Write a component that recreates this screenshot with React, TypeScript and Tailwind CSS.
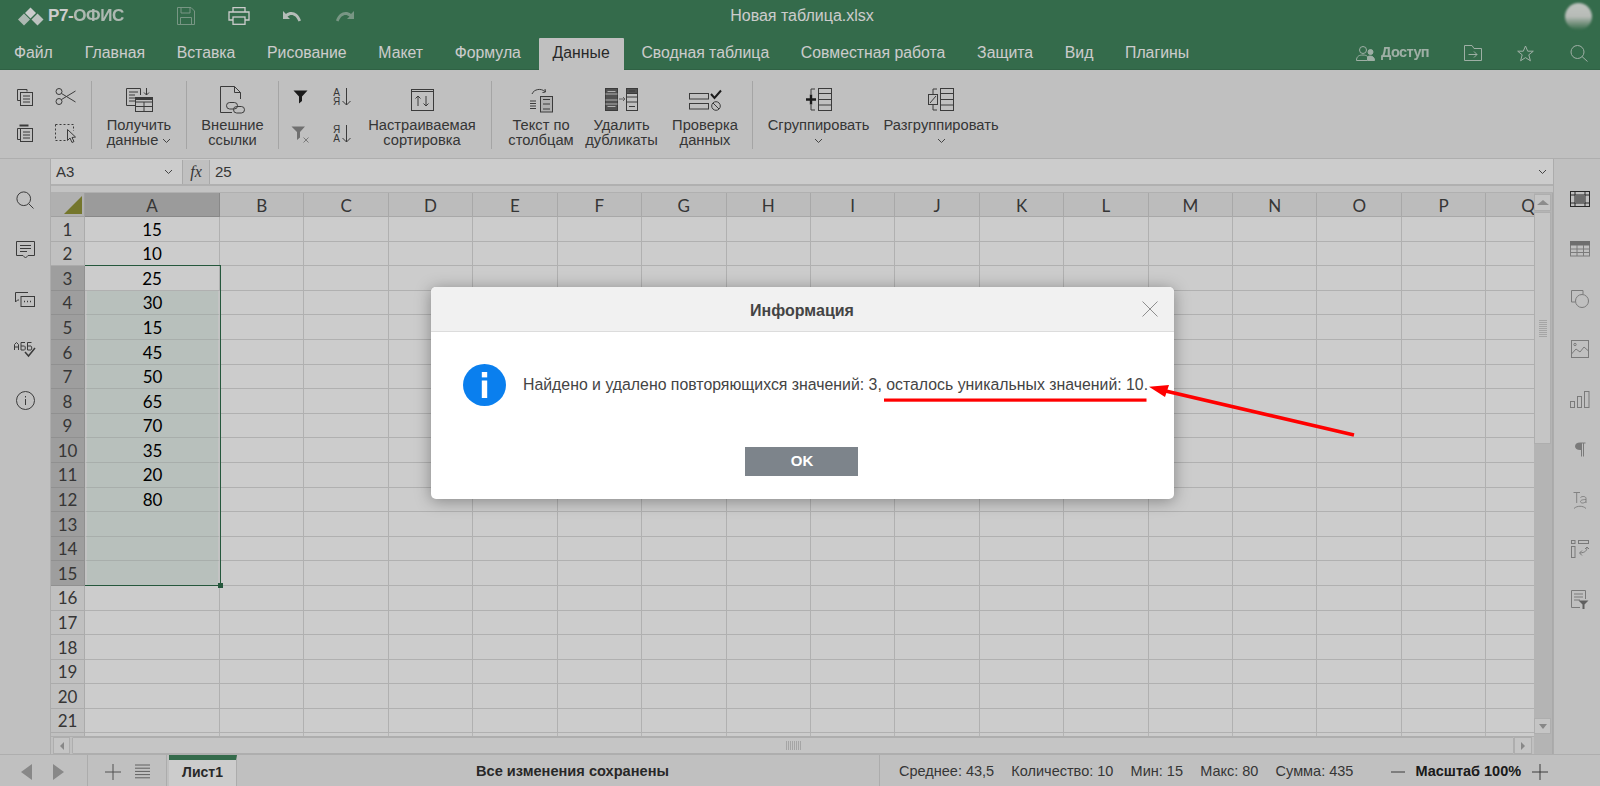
import React from "react";

const F = "[font-family:'Liberation_Sans',Arial,sans-serif]";
const I = "#4a4a4a";

function Svg({ w, h, children, className = "" }: { w: number; h: number; children: React.ReactNode; className?: string }) {
  return (
    <svg width={w} height={h} viewBox={`0 0 ${w} ${h}`} fill="none" stroke={I} strokeWidth={1} className={"shrink-0 " + className}>
      {children}
    </svg>
  );
}

const Chevron = ({ c = "#555" }: { c?: string }) => (
  <svg width="9" height="6" viewBox="0 0 9 6" fill="none" stroke={c} className="shrink-0">
    <path d="M1 1l3.5 3.5L8 1" />
  </svg>
);

function Tab({ t, active }: { t: string; active?: boolean }) {
  return (
    <div className={"flex h-[32px] items-center rounded-t-[1px] px-[14px] pb-[3px] text-[15.8px] " + (active ? "bg-[#f1f1f1] text-[#333]" : "text-white")}>{t}</div>
  );
}

function Tool({ icon, lines, w, chev, chevLine, className = "" }: { icon: React.ReactNode; lines: string[]; w: number; chev?: boolean; chevLine?: boolean; className?: string }) {
  return (
    <div className={"flex h-[68px] shrink-0 flex-col items-center " + className} style={{ width: w }}>
      <div className="flex h-[37px] items-center justify-center">{icon}</div>
      <div className="flex flex-col items-center whitespace-nowrap text-[14.7px] leading-[15px] text-[#444]">
        {lines.map((l, i) => (
          <div key={i} className="flex h-[15px] items-center gap-[4px]">
            {l}
            {chev && i === lines.length - 1 && <Chevron />}
          </div>
        ))}
        {chevLine && (
          <div className="flex h-[15px] items-center">
            <Chevron />
          </div>
        )}
      </div>
    </div>
  );
}

const Div = () => <div className="h-[68px] w-px shrink-0 bg-[#cfcfcf]" />;

const CopyIcon = () => (
  <Svg w={18} h={18}>
    <path d="M11 3.5V1.5H1.5V12.5H4" />
    <rect x="4.5" y="4.5" width="12" height="13" />
    <path d="M7 8h7M7 11h7M7 14h7" />
  </Svg>
);
const PasteIcon = () => (
  <Svg w={18} h={18}>
    <path d="M4 4.5H1.5V15.5H4" />
    <path d="M3.5 1.5H12.5" strokeWidth={2} />
    <rect x="4.5" y="4.5" width="12" height="13" />
    <path d="M7 8h7M7 11h7M7 14h7" />
  </Svg>
);
const Scissors = () => (
  <Svg w={21} h={17}>
    <circle cx="4" cy="3.5" r="3" />
    <circle cx="4" cy="13.5" r="3" />
    <path d="M6.5 5.5L20.5 14M6.5 11.5L20.5 3" />
  </Svg>
);
const SelectAll = () => (
  <Svg w={23} h={20}>
    <path d="M1.5 1.5H19.5V8M1.5 1.5V17.5H12" strokeDasharray="2 2" />
    <path d="M13.5 6.5V17.5L16 15L18 19.5L20 18.5L18 14.5L21.5 14Z" fill="#f1f1f1" />
  </Svg>
);
const GetData = () => (
  <Svg w={28} h={26}>
    <path d="M10 18.5H1.5V1.5H15.5V8" />
    <path d="M4 5h9M4 8h6M4 11h6M4 14h6" />
    <path d="M21.5 1v7M19 5.5l2.5 2.5 2.5-2.5" />
    <rect x="10.5" y="10.5" width="17" height="14" />
    <path d="M10.5 15h17M10.5 19.5h17M19 15v9.5" />
    <path d="M10.5 12h17" strokeWidth={2} />
  </Svg>
);
const ExtLinks = () => (
  <Svg w={27} h={29}>
    <path d="M13 27.5H1.5V1.5H15.5L21.5 7.5V14" />
    <path d="M15.5 1.5V7.5H21.5" />
    <rect x="7.5" y="17.5" width="11" height="6.5" rx="3.2" />
    <rect x="14.5" y="21.5" width="11" height="6.5" rx="3.2" />
  </Svg>
);
const FilterIcon = () => (
  <svg width="15" height="14" viewBox="0 0 15 14" className="shrink-0">
    <path d="M0.5 0.5H14.5L9 6.5V11L6 13.5V6.5Z" fill="#222" />
  </svg>
);
const ClearFilter = () => (
  <svg width="19" height="17" viewBox="0 0 19 17" className="shrink-0" fill="none">
    <path d="M0.5 0.5H14L9 6V11.5L6 14V6Z" fill="#8c8c8c" />
    <path d="M12.5 11.5l5 5M17.5 11.5l-5 5" stroke="#999" />
  </svg>
);
function SortIcon({ a, b }: { a: string; b: string }) {
  return (
    <div className="flex items-center gap-[2px]">
      <div className="flex flex-col items-center text-[10px] leading-[9px] text-[#444]">
        <span>{a}</span>
        <span>{b}</span>
      </div>
      <Svg w={9} h={18}>
        <path d="M4.5 0v17M0.5 13l4 4 4-4" />
      </Svg>
    </div>
  );
}
const CustomSort = () => (
  <Svg w={25} h={24}>
    <rect x="1.5" y="1.5" width="22" height="21" />
    <path d="M1.5 3.5h22" />
    <path d="M8 18V8M5.5 10.5L8 8l2.5 2.5M16 8v10M13.5 15.5L16 18l2.5-2.5" />
  </Svg>
);
const TextCols = () => (
  <Svg w={25} h={26}>
    <path d="M3 7C5 2 12 1 16 4.5" />
    <path d="M13.5 5.5l3-.5-.5-3" />
    <path d="M1 14h6M1 16.5h6M1 19h6M1 21.5h6" />
    <rect x="11.5" y="9.5" width="12" height="15.5" fill="#ddd" />
    <path d="M14 12.5h7M14 17h7M14 22h7" />
  </Svg>
);
const Dedup = () => (
  <Svg w={33} h={23}>
    <rect x="0.5" y="0.5" width="12" height="22" fill="#666" />
    <path d="M2.5 3.5h8M2.5 18.5h8M0.5 6h12M0.5 12h12M0.5 16h12" stroke="#ddd" />
    <rect x="21.5" y="0.5" width="11" height="22" />
    <rect x="21.5" y="0.5" width="11" height="5" fill="#666" />
    <path d="M21.5 9h11M21.5 14h11M24 3h6M24 18.5h6" />
    <path d="M14 11h6M18 9l2 2-2 2" stroke="#777" />
  </Svg>
);
const Validate = () => (
  <Svg w={33} h={22}>
    <rect x="0.5" y="4.5" width="19" height="5.5" />
    <rect x="0.5" y="14.5" width="19" height="5.5" />
    <path d="M22 5l3.5 4L32 1.5" strokeWidth={2} stroke="#222" />
    <circle cx="27" cy="17" r="4.3" />
    <path d="M24 14l6 6" />
  </Svg>
);
const Group = () => (
  <Svg w={26} h={23}>
    <path d="M9 1h-4v5M9 22h-4v-5" />
    <path d="M0 11.5h10M5 6.5v10" strokeWidth={2.4} stroke="#222" />
    <rect x="12.5" y="0.5" width="13" height="22" />
    <path d="M12.5 5.5h13M12.5 11.5h13M12.5 17h13" />
  </Svg>
);
const Ungroup = () => (
  <Svg w={26} h={23}>
    <path d="M9 1h-4v5M9 22h-4v-5" />
    <rect x="0.5" y="6.5" width="9" height="10" />
    <path d="M2 15l6-7" />
    <rect x="12.5" y="0.5" width="13" height="22" />
    <path d="M12.5 5.5h13M12.5 11.5h13M12.5 17h13" />
  </Svg>
);

const cols = ["B", "C", "D", "E", "F", "G", "H", "I", "J", "K", "L", "M", "N", "O", "P", "Q"];
const vals: (number | string)[] = [15, 10, 25, 30, 15, 45, 50, 65, 70, 35, 20, 80, "", "", "", "", "", "", "", "", ""];

const Lato = "[font-family:Lato,'Liberation_Sans',sans-serif]";

function Row({ n, v }: { n: number | string; v: number | string }) {
  const idx = Number(n);
  const sel = idx >= 3 && idx <= 15;
  const tint = idx >= 4 && idx <= 15;
  return (
    <div className={"flex h-[24.6px] shrink-0 " + Lato}>
      <div className={"flex w-[34px] shrink-0 items-center justify-center border-b border-r pt-px text-[17px] text-[#444] " + (sel ? "border-[#b4b4b4] bg-[#c6c6c6]" : "border-[#d6d6d6] bg-[#f1f1f1]")}>{n}</div>
      <div className={"flex w-[135px] shrink-0 items-center justify-center border-b pt-px text-[17px] text-black " + (tint ? "border-l-2 border-r-2 border-b-[#d2dad6] border-l-[#f4f4f4] border-r-[#f4f4f4] bg-[#e6f0ec]" : "border-r border-[#dcdcdc] bg-white")}>{v}</div>
      {cols.map((c) => (
        <div key={c} className="w-[84.43px] shrink-0 border-b border-r border-[#dcdcdc] bg-white" />
      ))}
    </div>
  );
}

const SideSearch = ({ s = 18 }: { s?: number }) => (
  <Svg w={s} h={s}>
    <circle cx={s * 0.43} cy={s * 0.43} r={s * 0.38} />
    <path d={`M${s * 0.7} ${s * 0.7}L${s - 0.5} ${s - 0.5}`} />
  </Svg>
);

function Slot({ children }: { children: React.ReactNode }) {
  return <div className="flex h-[50px] shrink-0 items-center justify-center">{children}</div>;
}

export default function App() {
  return (
    <div className={"relative flex h-[786px] w-[1600px] flex-col overflow-hidden bg-white " + F}>
      {/* header */}
      <header className="flex h-[70px] shrink-0 flex-col border-b border-[#3b7a56] bg-[#42865e]">
        <div className="grid h-[38px] shrink-0 grid-cols-[1fr_auto_1fr] items-center pb-[6px]">
          <div className="flex items-center">
            <svg width="26" height="19" viewBox="0 0 26 19" className="ml-[18px] shrink-0" fill="#fff">
              <path d="M12.5 0.5L18 6L12.5 11.5L7 6Z" />
              <path d="M6 6.5L12 12.5L6 18.5L0 12.5Z" opacity="0.8" />
              <path d="M19.5 6.5L25.5 12.5L19.5 18.5L13.5 12.5Z" opacity="0.9" />
            </svg>
            <span className="ml-[4px] text-[17px] font-bold tracking-[-0.4px] text-white">
              Р7-<span className="opacity-80">ОФИС</span>
            </span>
            <svg width="18" height="18" viewBox="0 0 18 18" fill="none" stroke="#fff" opacity=".45" className="ml-[53px] shrink-0">
              <path d="M0.5 0.5H14L17.5 4V17.5H0.5Z" />
              <path d="M4 0.5V6H13V0.5M3.5 17.5V10.5H14.5V17.5" />
            </svg>
            <svg width="22" height="18" viewBox="0 0 22 18" fill="none" stroke="#fff" strokeWidth="1.3" className="ml-[33px] shrink-0">
              <path d="M5 5V0.7H17V5" />
              <path d="M5 13H1V5H21V13H17" />
              <rect x="5" y="10" width="12" height="7.3" />
            </svg>
            <svg width="18" height="11" viewBox="0 0 18 11" fill="#fff" opacity=".85" className="ml-[33px] shrink-0">
              <path d="M0 0V8H7L4.5 5.5C8 2.5 13 3.5 15.5 10.5L18 9.5C15 1 8 -1 3 3Z" />
            </svg>
            <svg width="18" height="11" viewBox="0 0 18 11" fill="#fff" opacity=".45" className="ml-[35px] shrink-0">
              <path d="M18 0V8H11L13.5 5.5C10 2.5 5 3.5 2.5 10.5L0 9.5C3 1 10 -1 15 3Z" />
            </svg>
          </div>
          <div className="pl-[4px] text-[16px] text-white">Новая таблица.xlsx</div>
          <div className="flex justify-end pr-[8px]">
            <div className="h-[27px] w-[27px] rounded-full bg-gradient-to-b from-[#f0f4ef] via-[#e6ebe6] to-[#42865e] blur-[1px]" />
          </div>
        </div>
        <div className="flex h-[32px] items-center">
          <Tab t="Файл" />
          <div className="ml-[4px] flex items-center gap-[3.7px]">
            <Tab t="Главная" />
            <Tab t="Вставка" />
            <Tab t="Рисование" />
            <Tab t="Макет" />
            <Tab t="Формула" />
            <Tab t="Данные" active />
            <Tab t="Сводная таблица" />
            <Tab t="Совместная работа" />
            <Tab t="Защита" />
            <Tab t="Вид" />
            <Tab t="Плагины" />
          </div>
          <div className="ml-auto flex items-center pb-[2px] text-white">
            <svg width="19" height="15" viewBox="0 0 19 15" fill="none" stroke="#fff" opacity=".7" className="shrink-0">
              <circle cx="7" cy="4" r="3.5" />
              <path d="M0.5 14.5C0.5 10 3.5 9 7 9C9 9 10.5 9.5 11.5 10.5V14.5Z" />
              <circle cx="14.5" cy="6" r="2.5" fill="#fff" />
              <path d="M12 14.5V10.5C14 9.5 18.5 10 18.5 14.5Z" fill="#fff" />
            </svg>
            <span className="ml-[6px] text-[14.5px] font-bold tracking-[-0.6px] opacity-70">Доступ</span>
            <svg width="18" height="16" viewBox="0 0 18 16" fill="none" stroke="#fff" opacity=".7" className="ml-[35px] shrink-0">
              <path d="M0.5 15.5V0.5H8L10 3.5H17.5V15.5Z" />
              <path d="M4.5 9.5H13M10 6.5L13 9.5L10 12.5" />
            </svg>
            <svg width="17" height="17" viewBox="0 0 17 17" fill="none" stroke="#fff" opacity=".7" className="ml-[35px] shrink-0">
              <path d="M8.5 1L10.7 6.2H16.3L11.8 9.8L13.4 15.8L8.5 12.6L3.6 15.8L5.2 9.8L0.7 6.2H6.3Z" />
            </svg>
            <svg width="18" height="17" viewBox="0 0 18 17" fill="none" stroke="#fff" opacity=".7" className="ml-[36px] mr-[12px] shrink-0">
              <circle cx="7.5" cy="7" r="6.5" />
              <path d="M12 11.5L17.5 16.5" />
            </svg>
          </div>
        </div>
      </header>

      {/* toolbar */}
      <div className="flex h-[89px] shrink-0 items-start border-b border-[#dadada] bg-[#f1f1f1] pt-[11px]">
        <div className="grid w-[91px] shrink-0 grid-cols-[50px_31px] grid-rows-[31px_41px] place-items-center">
          <CopyIcon />
          <Scissors />
          <PasteIcon />
          <SelectAll />
        </div>
        <Div />
        <Tool w={94} icon={<GetData />} lines={["Получить", "данные"]} chev />
        <Div />
        <Tool w={91} icon={<ExtLinks />} lines={["Внешние", "ссылки"]} />
        <Div />
        <div className="grid w-[84px] shrink-0 grid-cols-2 grid-rows-[32px_42px] place-items-center">
          <FilterIcon />
          <SortIcon a="А" b="Я" />
          <ClearFilter />
          <SortIcon a="Я" b="А" />
        </div>
        <Tool w={116} icon={<CustomSort />} lines={["Настраиваемая", "сортировка"]} className="ml-[1px] mr-[11px]" />
        <Div />
        <Tool w={60} icon={<TextCols />} lines={["Текст по", "столбцам"]} className="ml-[19px]" />
        <Tool w={71} icon={<Dedup />} lines={["Удалить", "дубликаты"]} className="ml-[15px]" />
        <Tool w={64} icon={<Validate />} lines={["Проверка", "данных"]} className="ml-[16px] mr-[15px]" />
        <Div />
        <Tool w={99} icon={<Group />} lines={["Сгруппировать"]} chevLine className="ml-[16px]" />
        <Tool w={112} icon={<Ungroup />} lines={["Разгруппировать"]} chevLine className="ml-[17px]" />
      </div>

      {/* main */}
      <div className="flex min-h-0 flex-1">
        {/* left side */}
        <aside className="flex w-[51px] shrink-0 flex-col items-center border-r border-[#d8d8d8] bg-[#f1f1f1] pt-[16px]">
          <Slot><SideSearch /></Slot>
          <Slot>
            <Svg w={19} h={18}>
              <path d="M0.5 0.5H18.5V14.5H12L9.5 17L7 14.5H0.5Z" />
              <path d="M4 4.5h11M4 7.5h11M4 10.5h7" />
            </Svg>
          </Slot>
          <Slot>
            <Svg w={20} h={16}>
              <path d="M13 0.5H0.5V10L2.5 8H4" />
              <rect x="6" y="4.5" width="13.5" height="10" />
              <path d="M9 9.5h1M12 9.5h1M15 9.5h1" strokeWidth={1.5} />
            </Svg>
          </Slot>
          <Slot>
            <svg width="22" height="16" viewBox="0 0 22 16" fill="none" stroke={I} className="shrink-0">
              <path d="M0.5 8V2.5L2.5 0.5L4.5 2.5V8M0.5 5H4.5" />
              <path d="M7 8V0.5H11M7 4H10.5C11.5 4 11.5 8 10.5 8H7" />
              <path d="M13.5 8V0.5H17.5M13.5 4H17C18 4 18 8 17 8H13.5" />
              <path d="M11 10l3.5 4L21 6" strokeWidth="1.5" />
            </svg>
          </Slot>
          <Slot>
            <Svg w={19} h={19}>
              <circle cx="9.5" cy="9.5" r="9" />
              <path d="M9.5 8v6M9.5 5v1.5" />
            </Svg>
          </Slot>
        </aside>

        {/* center */}
        <div className="flex w-[1502px] shrink-0 flex-col">
          {/* formula bar */}
          <div className="flex h-[27px] shrink-0 items-center border-b-2 border-[#dcdcdc] bg-white pt-px text-[15px] text-[#444]">
            <div className="flex h-full w-[132px] shrink-0 items-center justify-between border-r border-[#d4d4d4] pl-[5px] pr-[9px]">
              A3
              <Chevron />
            </div>
            <div className="flex h-full w-[27px] shrink-0 items-center justify-center border-r border-[#d4d4d4] bg-[#f1f1f1] [font-family:'Liberation_Serif',serif] text-[16px] italic">fx</div>
            <span className="ml-[5px]">25</span>
            <div className="ml-auto pr-[6px]">
              <Chevron />
            </div>
          </div>
          <div className="h-[7px] shrink-0 border-b border-[#dcdcdc] bg-[#f4f4f4]" />

          <div className="flex min-h-0 flex-1">
            <div className="relative flex w-[1483px] shrink-0 flex-col overflow-hidden">
              {/* column header */}
              <div className={"flex h-[24px] shrink-0 text-[17px] text-[#444] " + Lato}>
                <div className="flex w-[34px] shrink-0 items-end justify-end border-b border-r border-[#c9c9c9] bg-[#dcdcdc] pb-[2px] pr-[2px]">
                  <svg width="18" height="18" viewBox="0 0 18 18" className="shrink-0">
                    <path d="M18 0V18H0Z" fill="#929438" />
                  </svg>
                </div>
                <div className="flex w-[135px] shrink-0 items-center justify-center border-b border-r border-[#aaa] bg-[#c2c2c2] pt-[2px]">A</div>
                {cols.map((c) => (
                  <div key={c} className="flex w-[84.43px] shrink-0 items-center justify-center border-b border-r border-[#d2d2d2] bg-[#ececec] pt-[2px]">{c}</div>
                ))}
              </div>
              <div className="relative flex min-h-0 flex-1 flex-col overflow-hidden">
                {vals.map((v, i) => (
                  <Row key={i} n={i + 1} v={v} />
                ))}
                {/* partial row */}
                <div className="flex h-[24.6px] shrink-0">
                  <div className="w-[34px] shrink-0 border-r border-[#d6d6d6] bg-[#f1f1f1]" />
                  <div className="w-[135px] shrink-0 border-r border-[#e2e2e2]" />
                  {cols.map((c) => (
                    <div key={c} className="w-[84.43px] shrink-0 border-r border-[#e2e2e2]" />
                  ))}
                </div>
                {/* selection frame */}
                <div className="absolute left-[34px] top-[48px] h-[321px] w-[135.5px] border-b-[1.4px] border-r-[1.4px] border-t-[1.4px] border-[#2f6d4c]">
                  <div className="absolute -bottom-[3px] -right-[3px] h-[5px] w-[5px] bg-[#2f6d4c]" />
                </div>
              </div>
              {/* h scrollbar */}
              <div className="flex h-[18px] shrink-0 items-center border-t border-[#dadada] bg-[#f1f1f1] pl-[2px] pr-[2px]">
                <div className="flex h-[17px] w-[17px] shrink-0 items-center justify-center border border-[#dadada] bg-[#f7f7f7]">
                  <div className="h-0 w-0 border-y-[4px] border-r-[4px] border-y-transparent border-r-[#aaa]" />
                </div>
                <div className="ml-[2px] flex h-[17px] flex-1 items-center justify-center rounded-[1px] border border-[#dadada] bg-[#f7f7f7]">
                  <div className="h-[9px] w-[15px] bg-[repeating-linear-gradient(90deg,#cfcfcf_0,#cfcfcf_1px,transparent_1px,transparent_2px)]" />
                </div>
                <div className="flex h-[17px] w-[18px] shrink-0 items-center justify-center border border-[#dadada] bg-[#f7f7f7]">
                  <div className="h-0 w-0 border-y-[4px] border-l-[4px] border-y-transparent border-l-[#aaa]" />
                </div>
              </div>
            </div>
            {/* v scrollbar */}
            <div className="flex w-[19px] shrink-0 flex-col border-r border-[#d4d4d4] bg-[#e1e1e1] pr-px">
              <div className="mt-px flex h-[17px] shrink-0 items-center justify-center border border-[#dadada] bg-[#f7f7f7]">
                <div className="h-0 w-0 border-x-[6px] border-b-[5px] border-x-transparent border-b-[#b0b0b0]" />
              </div>
              <div className="mt-[1px] flex h-[232px] shrink-0 items-center justify-center border border-[#dadada] bg-[#f7f7f7]">
                <div className="h-[18px] w-[8px] bg-[repeating-linear-gradient(0deg,#cfcfcf_0,#cfcfcf_1px,transparent_1px,transparent_2px)]" />
              </div>
              <div className="mt-[274px] flex h-[16px] shrink-0 items-center justify-center border border-[#dadada] bg-[#f7f7f7]">
                <div className="h-0 w-0 border-x-[4px] border-t-[5px] border-x-transparent border-t-[#aaa]" />
              </div>
            </div>
          </div>
        </div>

        {/* right side */}
        <aside className="flex flex-1 flex-col border-l border-[#d8d8d8] bg-[#f1f1f1] pl-[6px] pt-[15px]">
          <Slot>
            <Svg w={20} h={16}>
              <rect x="0.5" y="0.5" width="19" height="15" stroke="#333" />
              <path d="M0.5 4h19M0.5 12h19M5 0.5v15M15 0.5v15" stroke="#333" />
              <rect x="5" y="4" width="10" height="8" fill="#888" stroke="none" />
            </Svg>
          </Slot>
          <Slot>
            <Svg w={20} h={16}>
              <rect x="0.5" y="0.5" width="19" height="14.5" stroke="#9a9a9a" />
              <rect x="0.5" y="0.5" width="19" height="3.5" fill="#8a8a8a" stroke="#8a8a8a" />
              <path d="M0.5 8h19M0.5 11.5h19M7 4v11M13.5 4v11" stroke="#9a9a9a" />
            </Svg>
          </Slot>
          <Slot>
            <Svg w={18} h={18}>
              <path d="M4 12H0.5V0.5H12V4" stroke="#999" />
              <circle cx="11" cy="11" r="6.5" stroke="#999" />
            </Svg>
          </Slot>
          <Slot>
            <Svg w={18} h={18}>
              <rect x="0.5" y="0.5" width="17" height="17" stroke="#999" />
              <circle cx="4" cy="4.5" r="1.2" stroke="#999" />
              <path d="M0.5 14L5 9L9 12L13 7L17.5 11" stroke="#999" />
            </Svg>
          </Slot>
          <Slot>
            <Svg w={20} h={17}>
              <rect x="0.5" y="10.5" width="4" height="6" stroke="#999" />
              <rect x="7.5" y="5.5" width="4" height="11" stroke="#999" />
              <rect x="14.5" y="0.5" width="4.5" height="16" stroke="#999" />
            </Svg>
          </Slot>
          <Slot>
            <svg width="12" height="15" viewBox="0 0 12 15" className="shrink-0" fill="#999">
              <path d="M6 0.5H11.5V1.5H10V14.5H9V1.5H8V14.5H7V8H6C3 8 1 6.5 1 4.2C1 2 3 0.5 6 0.5Z" />
            </svg>
          </Slot>
          <Slot>
            <svg width="15" height="18" viewBox="0 0 15 18" fill="none" stroke="#a3a3a3" className="mt-[4px] shrink-0">
              <path d="M0.5 0.5H7M3.7 0.5V11" />
              <path d="M7.5 5.5C9 4 13 4 13 6.5V11M13 7.5C9 7.5 7.5 8.5 7.5 9.5C7.5 11.5 11 11.5 13 9.5" />
              <path d="M1 16.5C4 13.5 10 13.5 13 16.5" />
            </svg>
          </Slot>
          <Slot>
            <svg width="18" height="18" viewBox="0 0 18 18" fill="none" stroke="#999" className="shrink-0">
              <rect x="0.5" y="0.5" width="3.5" height="3" />
              <rect x="0.5" y="6.5" width="3.5" height="11" />
              <rect x="7.5" y="0.5" width="10" height="3" />
              <path d="M16 7C16 11 14 12.5 9 13M11 10.5L8.5 13L11 15.5" />
              <path d="M16 7L14 9M16 7L18 9" />
            </svg>
          </Slot>
          <Slot>
            <svg width="18" height="19" viewBox="0 0 18 19" fill="none" stroke="#999" className="shrink-0">
              <path d="M9 17.5H0.5V0.5H14.5V9" />
              <path d="M3 4h9M3 7h9M3 10h6" />
              <path d="M7.5 10.5H17.5L13.5 14.5V19H11.5V14.5Z" fill="#777" stroke="none" />
            </svg>
          </Slot>
        </aside>
      </div>

      {/* status bar */}
      <footer className="flex h-[32px] shrink-0 items-center border-t border-[#dadada] bg-[#f1f1f1] text-[14.5px] text-[#444]">
        <div className="flex h-full w-[88px] shrink-0 items-center border-r border-[#d8d8d8] pl-[21px] pt-[2px]">
          <div className="h-0 w-0 border-y-[8px] border-r-[11px] border-y-transparent border-r-[#aaa]" />
          <div className="ml-[21px] h-0 w-0 border-y-[8px] border-l-[11px] border-y-transparent border-l-[#aaa]" />
        </div>
        <div className="flex h-full w-[79px] shrink-0 items-center border-r border-[#d8d8d8] pl-[17px] pt-[2px]">
          <Svg w={16} h={16}>
            <path d="M8 0v16M0 8h16" stroke="#666" />
          </Svg>
          <Svg w={15} h={15} className="ml-[14px]">
            <path d="M0 1h15M0 4.2h15M0 7.4h15M0 10.6h15M0 13.8h15" stroke="#777" />
          </Svg>
        </div>
        <div className="ml-[2px] flex h-full w-[68px] shrink-0 items-center justify-center border-r border-t-[5px] border-r-[#d8d8d8] border-t-[#42865e] bg-white pb-[1px] text-[14px] font-bold text-[#333]">
          Лист1
        </div>
        <div className="ml-[239px] whitespace-nowrap pt-[3px] text-[14.6px] font-bold text-[#333]">Все изменения сохранены</div>
        <div className="ml-auto flex h-full w-[721px] shrink-0 items-center whitespace-nowrap border-l border-[#d8d8d8] pl-[19px] pt-[3px]">
          <span>Среднее: 43,5</span>
          <span className="ml-[17.2px]">Количество: 10</span>
          <span className="ml-[17.2px]">Мин: 15</span>
          <span className="ml-[17.2px]">Макс: 80</span>
          <span className="ml-[17.2px]">Сумма: 435</span>
          <Svg w={14} h={2} className="ml-[38px]">
            <path d="M0 1h14" />
          </Svg>
          <span className="ml-[10px] font-bold text-[#222]">Масштаб 100%</span>
          <Svg w={16} h={16} className="ml-[11px]">
            <path d="M8 0v16M0 8h16" />
          </Svg>
        </div>
      </footer>

      {/* modal mask */}
      <div className="absolute inset-0 bg-black/20" />

      {/* dialog */}
      <div className="absolute left-[430.5px] top-[287px] flex h-[212px] w-[743px] flex-col overflow-hidden rounded-[5px] bg-white shadow-[0_2px_16px_rgba(0,0,0,0.35)]">
        <div className="relative flex h-[45px] shrink-0 items-center justify-center border-b border-[#dcdcdc] bg-[#f1f1f1] pt-[3px] text-[16px] font-bold text-[#444]">
          Информация
          <svg width="16" height="16" viewBox="0 0 16 16" fill="none" stroke="#8e8e8e" className="absolute right-[16px] top-[14px]">
            <path d="M0.5 0.5L15.5 15.5M15.5 0.5L0.5 15.5" />
          </svg>
        </div>
        <div className="flex items-center pl-[32px] pt-[32px]">
          <svg width="43" height="42" viewBox="0 0 43 42" className="shrink-0">
            <ellipse cx="21.5" cy="21" rx="21.5" ry="21" fill="#0a7fee" />
            <rect x="18.8" y="8" width="5.4" height="5.4" fill="#fff" />
            <rect x="18.8" y="16.5" width="5.4" height="17.5" fill="#fff" />
          </svg>
          <div className="ml-[17.5px] whitespace-nowrap text-[15.85px] text-[#444]">Найдено и удалено повторяющихся значений: 3, осталось уникальных значений: 10.</div>
        </div>
        <div className="mt-[41px] flex justify-center pr-[2px]">
          <div className="flex h-[29px] w-[113px] items-center justify-center bg-[#7d848b] pl-[2px] text-[15px] font-bold text-white">OK</div>
        </div>
      </div>

      {/* red annotation */}
      <svg className="pointer-events-none absolute left-0 top-0" width="1600" height="786" viewBox="0 0 1600 786">
        <rect x="884" y="398.5" width="262.5" height="3.2" fill="#f00" />
        <polygon points="1149,386.7 1169,385 1165,397" fill="#f00" />
        <polygon points="1165,389 1164,392.6 1353.6,436.8 1354.4,433.2" fill="#f00" />
      </svg>
    </div>
  );
}
